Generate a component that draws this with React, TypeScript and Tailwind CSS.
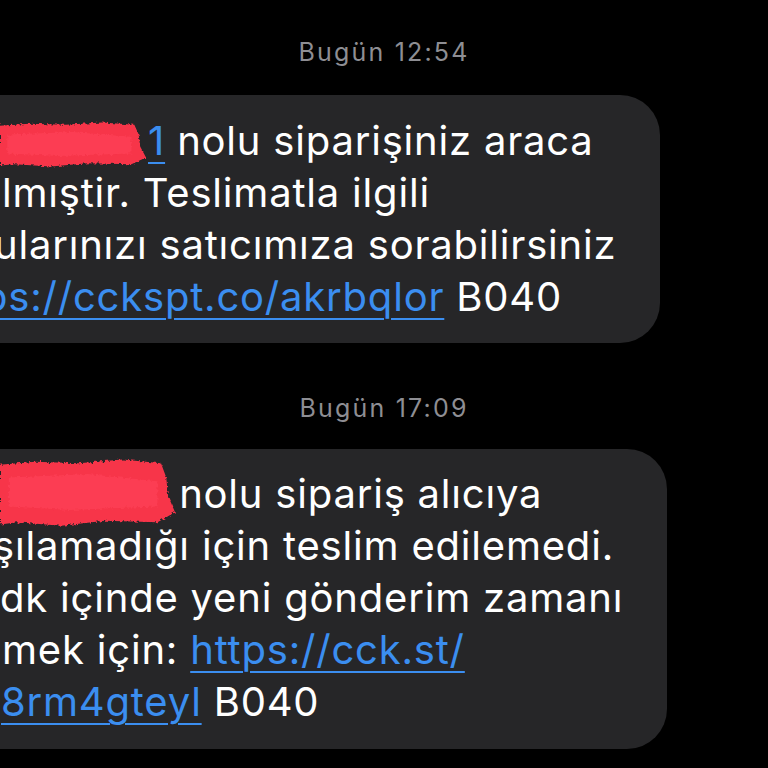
import React from "react";

const link = "text-[#3b8ef0] underline decoration-2 underline-offset-[7px]";

function Scribble({ w, h, id }: { w: number; h: number; id: string }) {
  return (
    <svg width={w + 6} height={h + 6} viewBox={`0 0 ${w + 6} ${h + 6}`} className="absolute left-0 top-0">
      <defs>
        <filter id={id}>
          <feTurbulence type="fractalNoise" baseFrequency="0.35" numOctaves="2" seed="3" />
          <feDisplacementMap in="SourceGraphic" scale="5" />
        </filter>
      </defs>
      <g filter={`url(#${id})`}>
        <path
          d={`M0 ${h * 0.12} L${w * 0.2} ${h * 0.08} L${w * 0.45} ${h * 0.1} L${w * 0.7} ${h * 0.05} L${w * 0.92} ${h * 0.1} L${w * 0.95} ${h * 0.3} L${w * 0.96} ${h * 0.55} L${w} ${h * 0.78} L${w * 0.9} ${h * 0.92} L${w * 0.6} ${h * 0.9} L${w * 0.35} ${h * 0.97} L${w * 0.1} ${h * 0.92} L0 ${h * 0.95} Z`}
          fill="#f7344a"
        />
        <path
          d={`M${w * 0.05} ${h * 0.3} L${w * 0.5} ${h * 0.25} L${w * 0.9} ${h * 0.35} L${w * 0.9} ${h * 0.7} L${w * 0.4} ${h * 0.75} L${w * 0.05} ${h * 0.7} Z`}
          fill="#ff4558"
          opacity="0.6"
        />
      </g>
    </svg>
  );
}

export default function App() {
  return (
    <div className="w-[768px] h-[768px] bg-black overflow-hidden font-['Inter',sans-serif] text-white">
      <div className="mt-[36px] h-[32px] leading-[32px] text-center text-[25px] tracking-[2.2px] text-[#8e8e93]">
        Bugün 12:54
      </div>

      <div className="relative mt-[27px] -ml-[60px] w-[720px] rounded-[40px] bg-[#262628] pt-[20px] pb-[20px] pl-[60px] text-[40px] leading-[52px] tracking-[0.8px]">
        <div className="whitespace-nowrap">
          <span className={`${link} ml-[148px]`}>1</span> nolu siparişiniz araca
        </div>
        <div className="whitespace-nowrap ml-[2px]">lmıştir. Teslimatla ilgili</div>
        <div className="whitespace-nowrap -ml-[6px]">ularınızı satıcımıza sorabilirsiniz</div>
        <div className="whitespace-nowrap -ml-[17px]">
          <span className={link}>ps://cckspt.co/akrbqlor</span> B040
        </div>
        <div className="absolute left-[60px] top-[25px]">
          <Scribble w={146} h={48} id="s1" />
        </div>
      </div>

      <div className="mt-[49px] h-[32px] leading-[32px] text-center text-[25px] tracking-[2.2px] text-[#8e8e93]">
        Bugün 17:09
      </div>

      <div className="relative mt-[25px] -ml-[60px] w-[727px] rounded-[40px] bg-[#262628] pt-[19px] pb-[21px] pl-[60px] text-[40px] leading-[52px] tracking-[0.8px]">
        <div className="whitespace-nowrap">
          <span className={`${link} ml-[150px]`}>1</span> nolu sipariş alıcıya
        </div>
        <div className="whitespace-nowrap -ml-[7px]">şılamadığı için teslim edilemedi.</div>
        <div className="whitespace-nowrap">dk içinde yeni gönderim zamanı</div>
        <div className="whitespace-nowrap ml-[2px]">
          mek için: <span className={link}>https://cck.st/</span>
        </div>
        <div className="whitespace-nowrap ml-[1px]">
          <span className={link}>8rm4gteyl</span> B040
        </div>
        <div className="absolute left-[60px] top-[7px]">
          <Scribble w={175} h={72} id="s2" />
        </div>
      </div>
    </div>
  );
}
